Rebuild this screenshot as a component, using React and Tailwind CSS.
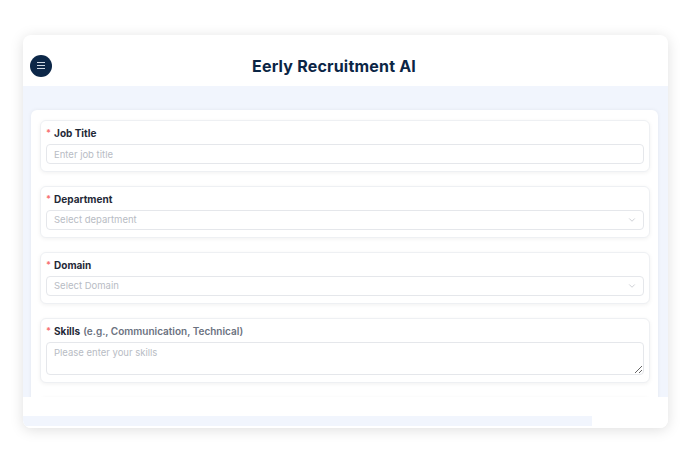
import React from "react";
import { ChevronDown } from "lucide-react";

const font = { fontFamily: "Inter, 'Open Sans', sans-serif" };

const Label = ({ children, hint }) => (
  <div className="flex items-center h-[13px] mb-[5px] text-[10px] leading-none font-bold text-[#1f2937]">
    <span className="text-[#f87171] mr-[3px] text-[9px]">*</span>
    <span>{children}</span>
    {hint && <span className="ml-[3px] font-semibold text-[#6b7280]">{hint}</span>}
  </div>
);

const FieldCard = ({ children }) => (
  <div className="bg-white border border-[#eef0f3] rounded-md shadow-[0_1px_4px_rgba(0,0,0,0.06)] px-[5px] pt-[5px] pb-[7px]">
    {children}
  </div>
);

const SelectBox = ({ placeholder }) => (
  <div className="h-[20px] border border-[#e5e7eb] rounded flex items-center justify-between pl-[7px] pr-[6px]">
    <span className="text-[9.5px] text-[#b8bcc4]">{placeholder}</span>
    <ChevronDown size={10} strokeWidth={1.5} className="text-[#b0b4bb]" />
  </div>
);

export default function App() {
  return (
    <div className="w-[691px] h-[462px] bg-white pt-[35px] pl-[23px]" style={font}>
      <div className="w-[645px] h-[393px] bg-white rounded-lg shadow-[0_2px_14px_rgba(0,0,0,0.13)] overflow-hidden flex flex-col">
        {/* header */}
        <div className="h-[51px] shrink-0 flex items-center pt-[10px] pl-[7px]">
          <button className="w-[22px] h-[22px] rounded-full bg-[#0c2748] flex items-center justify-center">
            <svg width="10" height="9" viewBox="0 0 10 9" fill="none" stroke="#cfd8e3" strokeWidth="1.2">
              <path d="M1 1.5h8M1 4.5h8M1 7.5h8" />
            </svg>
          </button>
          <h1 className="ml-[200px] text-[16px] font-bold text-[#0b2545] tracking-[0.2px]">
            Eerly Recruitment AI
          </h1>
        </div>

        {/* body */}
        <div className="h-[311px] shrink-0 bg-[#f1f5fd] pt-[24px] pl-[8px] pr-[10px] overflow-hidden">
          <div className="bg-white rounded-md shadow-[0_0_4px_rgba(0,0,0,0.06)] pt-[10px] pl-[9px] pr-[8px] pb-[10px] flex flex-col gap-[14px]">
            <FieldCard>
              <Label>Job Title</Label>
              <input
                className="block w-full h-[20px] border border-[#e5e7eb] rounded pl-[7px] text-[9.5px] placeholder:text-[#b8bcc4] outline-none"
                placeholder="Enter job title"
              />
            </FieldCard>
            <FieldCard>
              <Label>Department</Label>
              <SelectBox placeholder="Select department" />
            </FieldCard>
            <FieldCard>
              <Label>Domain</Label>
              <SelectBox placeholder="Select Domain" />
            </FieldCard>
            <FieldCard>
              <Label hint="(e.g., Communication, Technical)">Skills</Label>
              <textarea
                className="block w-full h-[33px] border border-[#e5e7eb] rounded pl-[7px] pt-[3px] text-[9.5px] placeholder:text-[#b8bcc4] outline-none"
                placeholder="Please enter your skills"
              />
            </FieldCard>
            <FieldCard>
              <div className="h-[38px]" />
            </FieldCard>
          </div>
        </div>

        {/* bottom scroll strip */}
        <div className="flex-1 bg-white flex flex-col justify-end pb-[2px]">
          <div className="h-[10px] w-[569px] bg-[#f1f5fd]" />
        </div>
      </div>
    </div>
  );
}
